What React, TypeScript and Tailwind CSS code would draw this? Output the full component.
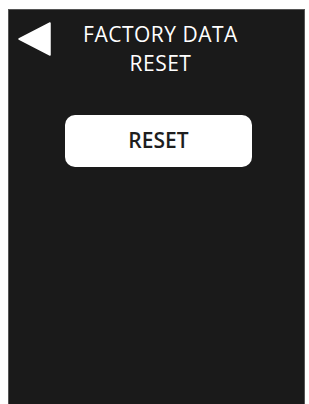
export default function App() {
  return (
    <div className="w-[309px] h-[404px] bg-white pt-[9px] pl-[8px] pr-[4px]">
      <div className="h-[395px] bg-[#1a1a1a] border border-[#555] border-b-0 flex flex-col" style={{ fontFamily: '"Open Sans", sans-serif' }}>
        <div className="flex items-start">
          <svg className="mt-[12px] ml-[9px] shrink-0" width="33" height="34" viewBox="0 0 33 34">
            <path d="M1 17 L32 1 L32 33 Z" fill="#fff" stroke="#fff" strokeWidth="1.5" strokeLinejoin="round" />
          </svg>
          <div className="flex-1 text-center text-white text-[21px] leading-[29px] mt-[10px] pr-[34px] tracking-[0.5px]">
            FACTORY DATA
            <br />
            RESET
          </div>
        </div>
        <div className="flex justify-start pl-[56px] mt-[37px]">
          <div className="w-[187px] h-[52px] bg-white rounded-[10px] flex items-center justify-center text-[#1e1e1e] text-[21px] font-semibold">
            RESET
          </div>
        </div>
      </div>
    </div>
  );
}
